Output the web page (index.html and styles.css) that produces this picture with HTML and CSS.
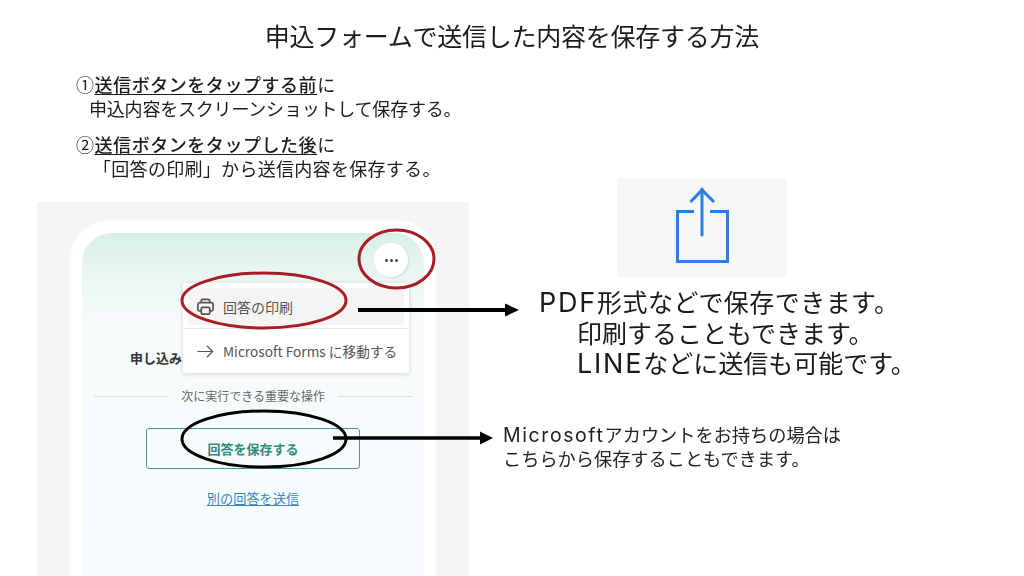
FILE: index.html
```html
<!DOCTYPE html>
<html lang="ja">
<head>
<meta charset="utf-8">
<title>申込フォームで送信した内容を保存する方法</title>
<link rel="stylesheet" href="styles.css">
</head>
<body>
<main class="slide">
  <h1 class="title">申込フォームで送信した内容を保存する方法</h1>

  <section class="notes">
    <div class="note">
      <p class="note-head">①<u>送信ボタンをタップする前</u>に</p>
      <p class="note-body">申込内容をスクリーンショットして保存する。</p>
    </div>
    <div class="note">
      <p class="note-head">②<u>送信ボタンをタップした後</u>に</p>
      <p class="note-body note-body-b">「回答の印刷」から送信内容を保存する。</p>
    </div>
  </section>

  <section class="panel">
    <div class="phone">
      <div class="screen">
        <div class="top-row"><span class="more"><i></i><i></i><i></i></span></div>
        <p class="done">申し込み</p>
        <div class="divider"><span>次に実行できる重要な操作</span></div>
        <div class="save-btn">回答を保存する</div>
        <a class="again" href="#">別の回答を送信</a>
      </div>
    </div>
  </section>

  <div class="menu">
    <div class="menu-item menu-item-on">
      <svg class="menu-icon" viewBox="0 0 20 20" fill="none" stroke="#555" stroke-width="1.800"><path d="M5.500 6V4.200A1.700 1.700 0 0 1 7.200 2.500h5.600a1.700 1.700 0 0 1 1.700 1.700V6"/><path d="M5.500 14.500H3.800A1.700 1.700 0 0 1 2 12.800V8A2 2 0 0 1 4 6h12a2 2 0 0 1 2 2v4.800a1.700 1.700 0 0 1-1.800 1.700h-1.700"/><rect x="5.500" y="11" width="9" height="7" rx="1.800"/></svg>
      <span>回答の印刷</span>
    </div>
    <div class="menu-item">
      <svg class="menu-icon" viewBox="0 0 20 20" fill="none" stroke="#555" stroke-width="1.300"><path d="M1.500 10h16M11.500 4l6 6-6 6"/></svg>
      <span>Microsoft Forms に移動する</span>
    </div>
  </div>

  <svg class="marks" viewBox="0 0 1024 576" aria-hidden="true">
    <ellipse cx="396.500" cy="259" rx="37.500" ry="29" fill="none" stroke="#a81c22" stroke-width="3"/>
    <ellipse cx="264" cy="300.500" rx="82" ry="27.500" fill="none" stroke="#a81c22" stroke-width="3"/>
    <ellipse cx="264" cy="439" rx="82" ry="28" fill="none" stroke="#000" stroke-width="3"/>
    <path d="M358 310H506" stroke="#000" stroke-width="4"/>
    <path d="M505 303.500L519 310L505 316.500Z" fill="#000"/>
    <path d="M333 438H481" stroke="#000" stroke-width="3.500"/>
    <path d="M480 431.500L493 438L480 444.500Z" fill="#000"/>
  </svg>

  <div class="share">
    <svg class="share-icon" viewBox="0 0 170 99" fill="none" stroke="#2b7fdc" stroke-width="3">
      <path d="M77 33.500H60.500V83.500H110.500V33.500H93"/>
      <path d="M85 11V57" stroke-linecap="round"/>
      <path d="M73.500 24L85 12L97 24"/>
    </svg>
  </div>

  <div class="big-text">
    <p class="big-a"><span class="latin-big">PDF</span>形式などで保存できます。</p>
    <p class="big-b">印刷することもできます。</p>
    <p class="big-b"><span class="latin-big">LINE</span>などに送信も可能です。</p>
  </div>

  <div class="small-text">
    <p><span class="latin-small">Microsoft</span>アカウントをお持ちの場合は</p>
    <p>こちらから保存することもできます。</p>
  </div>
</main>
</body>
</html>
```

FILE: styles.css
```css
* { box-sizing: border-box; }
html, body { margin: 0; padding: 0; background: #fff; }
p, h1 { margin: 0; font-weight: 400; }
body { font-family: "Noto Sans CJK JP", "Noto Sans", sans-serif; color: #1c1c1c; }

.slide { position: relative; width: 1024px; height: 576px; overflow: hidden; filter: blur(.3px); }

.title { font-size: 25px; line-height: 36px; letter-spacing: -.25px; text-align: center; padding-top: 17px; }

.notes { padding: 19px 0 0 76px; display: flex; flex-direction: column; gap: 12px; }
.note-head { font-size: 18px; line-height: 24px; letter-spacing: .55px; }
.note-head u { text-underline-offset: 2px; font-weight: 500; }
.note-body { font-size: 18px; line-height: 24px; padding-left: 13px; letter-spacing: -.2px; }
.note-body-b { padding-left: 17px; letter-spacing: .3px; }

.panel { position: absolute; left: 37px; top: 202px; width: 432px; height: 374px; background: #f5f5f5; padding: 16px 31px 0; overflow: hidden; }
.phone { height: 400px; background: #fff; border-radius: 42px 42px 0 0; padding: 15px 14px 0; box-shadow: inset 0 0 5px rgba(0,0,0,.09), 0 0 2px rgba(0,0,0,.05); }
.screen { height: 400px; border-radius: 30px 30px 0 0; background: linear-gradient(180deg, #d8eee9 0, #e9f5f3 40px, #f6fbfc 90px, #f7fbfd 100%); padding: 10px 12px 0; display: flex; flex-direction: column; align-items: center; }
.top-row { align-self: stretch; display: flex; justify-content: flex-end; padding-right: 4px; }
.more { width: 34px; height: 34px; border-radius: 50%; background: #fff; display: flex; align-items: center; justify-content: center; gap: 2px; box-shadow: 1px 1px 2px rgba(0,0,0,.1); }
.more i { width: 3px; height: 3px; border-radius: 50%; background: #444; }
.done { align-self: flex-start; margin: 71px 0 0 36px; font-size: 13px; line-height: 20px; font-weight: 700; color: #333; white-space: nowrap; }
.divider { align-self: stretch; display: flex; align-items: center; gap: 13px; margin-top: 19px; font-size: 12px; line-height: 18px; color: #666; }
.divider::before, .divider::after { content: ""; flex: 1; height: 1px; background: #d9dedf; }
.save-btn { width: 214px; height: 41px; margin-top: 23px; border: 1.500px solid #4a9a90; border-radius: 3px; font-size: 13px; font-weight: 700; color: #2e8b80; display: flex; align-items: center; justify-content: center; }
.again { margin-top: 20px; font-size: 13.200px; line-height: 20px; color: #3d85c0; text-decoration: underline; }

.menu { position: absolute; left: 183px; top: 283px; width: 226px; height: 90px; background: #fff; border-radius: 3px; box-shadow: 0 1px 5px rgba(0,0,0,.16); padding: 5px; }
.menu-item { height: 42px; display: flex; align-items: center; gap: 8px; padding-left: 8px; font-size: 13.700px; color: #555; white-space: nowrap; }
.menu-item-on { height: 37px; background: #f5f4f3; margin-bottom: 5px; position: relative; font-size: 14px; }
.menu-item-on::after { content: ""; position: absolute; left: -5px; right: -5px; bottom: -4px; height: 1px; background: #e8e8e8; }
.menu-icon { width: 19px; height: 19px; flex: none; }

.marks { position: absolute; left: 0; top: 0; width: 1024px; height: 576px; }

.share { position: absolute; left: 617px; top: 178px; width: 170px; height: 99px; background: #f6f6f6; }
.share-icon { display: block; width: 170px; height: 99px; }

.big-text { position: absolute; left: 539px; top: 286px; font-size: 25px; line-height: 30.500px; color: #1a1a1a; white-space: nowrap; }
.big-a { letter-spacing: .45px; }
.big-b { padding-left: 38px; }
.latin-big { font-family: Inter, "Noto Sans", sans-serif; font-size: 27px; line-height: 1; letter-spacing: 1.800px; }

.small-text { position: absolute; left: 503px; top: 423px; font-size: 18.200px; line-height: 23.500px; white-space: nowrap; color: #222; }
.latin-small { font-family: Inter, "Noto Sans", sans-serif; font-size: 19.500px; line-height: 1; letter-spacing: 1.600px; }
```
